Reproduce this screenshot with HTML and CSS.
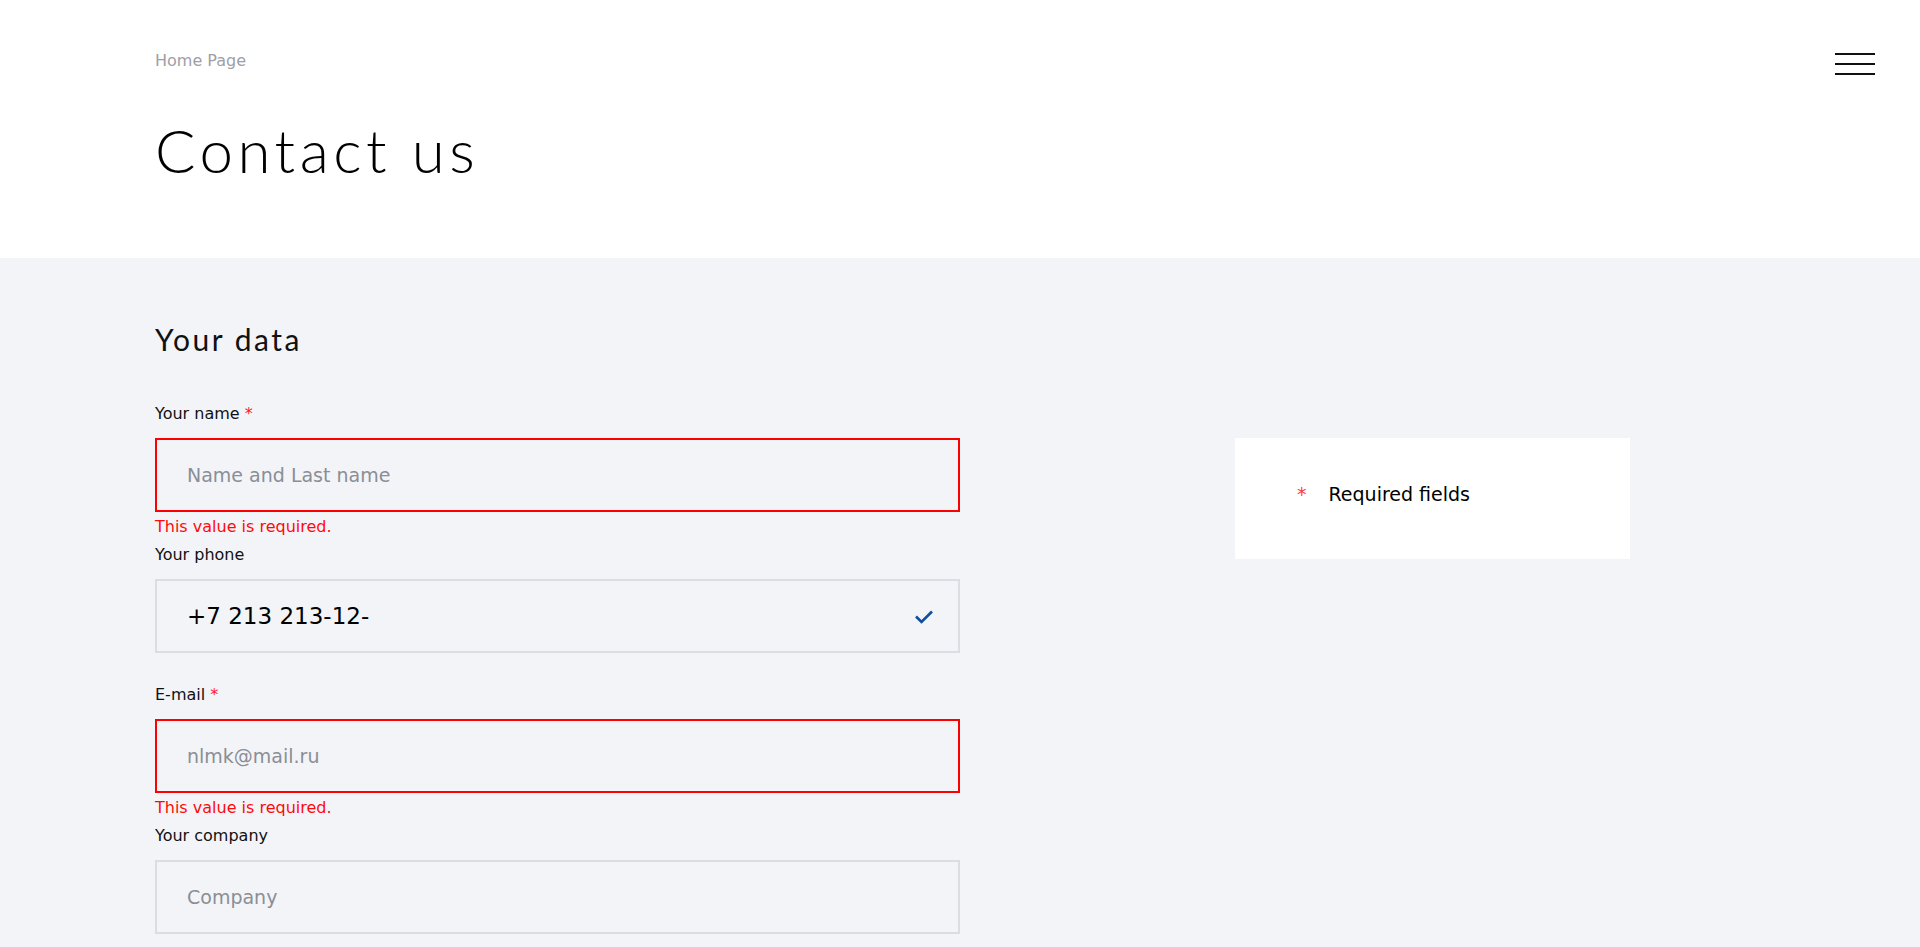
FILE: index.html
```html
<!DOCTYPE html>
<html lang="en">
<head>
    <meta charset="UTF-8">
    <meta name="viewport" content="width=device-width, initial-scale=1.0">
    <title>Contact us</title>
    <link rel="stylesheet" href="styles.css">
</head>
<body>
    <div class="header">
        <div class="header-top">
            <a class="breadcrumb" href="#">Home Page</a>
            <button class="burger" aria-label="Menu">
                <span></span>
                <span></span>
                <span></span>
            </button>
        </div>
        <h1>Contact us</h1>
    </div>

    <div class="content">
        <h2>Your data</h2>

        <div class="layout">
            <form class="form">
                <div class="field has-error">
                    <label class="label">Your name <span class="req">*</span></label>
                    <input class="input invalid" type="text" placeholder="Name and Last name">
                    <div class="error">This value is required.</div>
                </div>

                <div class="field">
                    <label class="label">Your phone</label>
                    <div class="input-wrap">
                        <input class="input filled" type="text" value="+7 213 213-12-">
                        <svg class="check" width="20" height="16" viewBox="0 0 20 16">
                            <path d="M2 8.5 L7.5 14 L18 3.5" fill="none" stroke="#0d4f9c" stroke-width="2.6"/>
                        </svg>
                    </div>
                </div>

                <div class="field has-error">
                    <label class="label">E-mail <span class="req">*</span></label>
                    <input class="input invalid" type="text" placeholder="nlmk@mail.ru">
                    <div class="error">This value is required.</div>
                </div>

                <div class="field">
                    <label class="label">Your company</label>
                    <input class="input" type="text" placeholder="Company">
                </div>
            </form>

            <div class="aside">
                <div class="note">
                    <span class="note-star">*</span>
                    <span>Required fields</span>
                </div>
            </div>
        </div>
    </div>
</body>
</html>
```

FILE: styles.css
```css
* {
    margin: 0;
    padding: 0;
    box-sizing: border-box;
}

body {
    font-family: "DejaVu Sans", Verdana, sans-serif;
    background: #f3f4f8;
    color: #000;
}

.header {
    background: white;
    padding: 51px 45px 72px 155px;
}

.header-top {
    display: flex;
    justify-content: space-between;
    align-items: flex-start;
    margin-bottom: 39px;
}

.breadcrumb {
    font-size: 16px;
    line-height: 20px;
    color: #9da0a6;
    text-decoration: none;
}

.burger {
    width: 40px;
    margin-top: 2px;
    background: none;
    border: none;
    display: flex;
    flex-direction: column;
    gap: 8px;
    cursor: pointer;
}

.burger span {
    display: block;
    height: 2px;
    background: #111;
}

.header h1 {
    font-family: Lato, sans-serif;
    font-weight: 300;
    font-size: 60px;
    line-height: 72px;
    letter-spacing: 4.5px;
    color: #000;
}

.content {
    padding: 63px 0 80px 155px;
}

.content h2 {
    font-family: Lato, sans-serif;
    font-weight: 400;
    font-size: 30px;
    line-height: 36px;
    letter-spacing: 2.5px;
    color: #111;
    margin-bottom: 47px;
}

.layout {
    display: grid;
    grid-template-columns: 805px 395px;
    column-gap: 275px;
    align-items: start;
}

.field {
    margin-bottom: 32px;
}

.field.has-error {
    margin-bottom: 8px;
}

.label {
    display: block;
    font-size: 16px;
    line-height: 20px;
    margin-bottom: 14px;
    color: #111;
}

.req {
    color: #ff1a1a;
}

.input-wrap {
    position: relative;
}

.input {
    display: block;
    width: 100%;
    height: 74px;
    padding: 0 30px;
    border: 2px solid #dcdde2;
    background: transparent;
    font-family: inherit;
    font-size: 19px;
    color: #000;
    outline: none;
}

.input::placeholder {
    color: #8a8e96;
}

.input.invalid {
    border-color: #ff0000;
}

.input.filled {
    font-size: 23px;
}

.check {
    position: absolute;
    right: 26px;
    top: 29px;
}

.error {
    margin-top: 5px;
    font-size: 16px;
    line-height: 20px;
    color: #ff0a0a;
}

.aside {
    margin-top: 34px;
}

.note {
    background: white;
    padding: 45px 62px 54px;
    font-size: 19px;
    line-height: 22px;
    display: flex;
    align-items: flex-start;
}

.note-star {
    color: #ff3b3b;
    margin-right: 22px;
}
```
